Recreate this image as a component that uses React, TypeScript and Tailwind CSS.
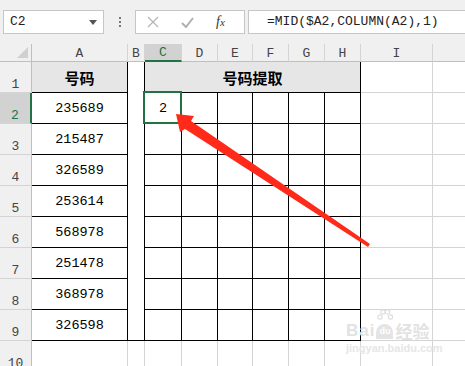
import React from "react";

const mono = "font-['Liberation_Mono','DejaVu_Sans_Mono',monospace]";
const cjk = "font-['Noto_Sans_CJK_SC',sans-serif]";

const numbers = ["235689", "215487", "326589", "253614", "568978", "251478", "368978", "326598"];

// column widths incl. right border
const inner = ["w-[37px]", "w-[36px]", "w-[35px]", "w-[36px]", "w-[36px]", "w-[36px]"];

function RowHead({ n, active }: { n: number; active?: boolean }) {
  return (
    <div
      className={`w-[32px] shrink-0 flex items-end justify-center pb-[1px] text-[13px] leading-none border-b border-[#d4d4d4] ${mono} ${
        active
          ? "bg-[#d2d2d2] text-[#217346] border-r-2 border-r-[#217346]"
          : "bg-[#f0f0f0] text-[#444] border-r border-r-[#bfbfbf]"
      }`}
    >
      {n}
    </div>
  );
}

function GrayTail() {
  return (
    <>
      <div className="w-[72px] shrink-0 border-r border-b border-[#d4d4d4]" />
      <div className="w-[40px] shrink-0 border-r border-b border-[#d4d4d4]" />
    </>
  );
}

export default function App() {
  return (
    <div className="relative w-[465px] h-[366px] overflow-hidden bg-white">
      {/* formula bar */}
      <div className="h-[44px] bg-[#f0f0f0] flex items-start pt-[10px] pl-[3px]">
        <div className="w-[101px] h-[24px] shrink-0 bg-white border border-[#c6c6c6] flex items-center justify-between pl-[6px] pr-[6px]">
          <span className={`${mono} text-[13px] text-[#222]`}>C2</span>
          <svg width="8" height="5" viewBox="0 0 8 5">
            <path d="M0 0h8L4 5z" fill="#555" />
          </svg>
        </div>
        <div className="w-[31px] h-[24px] shrink-0 flex flex-col items-center justify-center gap-[2px]">
          <span className="w-[2px] h-[2px] bg-[#777]" />
          <span className="w-[2px] h-[2px] bg-[#777]" />
          <span className="w-[2px] h-[2px] bg-[#777]" />
        </div>
        <div className="w-[110px] h-[24px] shrink-0 bg-white border border-[#c6c6c6] flex items-center pl-[11px]">
          <svg width="12" height="12" viewBox="0 0 12 12" className="mr-[22px]">
            <path d="M1 1l10 10M11 1L1 11" stroke="#b5b5b5" strokeWidth="1.3" />
          </svg>
          <svg width="13" height="11" viewBox="0 0 13 11" className="mr-[22px]">
            <path d="M1 6l4 4 7-9" stroke="#b0b0b0" strokeWidth="2" fill="none" />
          </svg>
          <span className="font-['Liberation_Serif',serif] italic text-[14px] text-[#333] leading-none">
            f<span className="text-[11px]">x</span>
          </span>
        </div>
        <div className="w-[230px] h-[24px] shrink-0 ml-[3px] bg-white border border-[#c6c6c6] flex items-center pl-[18px]">
          <span className={`${mono} text-[13px] text-[#222] whitespace-nowrap`}>=MID($A2,COLUMN(A2),1)</span>
        </div>
      </div>

      {/* column headers */}
      <div className={`flex h-[18px] bg-[#f0f0f0] text-[13px] text-[#444] ${mono}`}>
        <div className="w-[32px] shrink-0 border-r border-b border-[#bfbfbf] flex items-end justify-end pr-[3px] pb-[3px]">
          <svg width="11" height="11" viewBox="0 0 11 11">
            <path d="M11 0v11H0z" fill="#d0d0d0" />
          </svg>
        </div>
        <div className="w-[96px] shrink-0 border-r border-[#d4d4d4] border-b border-b-[#bfbfbf] flex items-center justify-center pt-[2px]">A</div>
        <div className="w-[17px] shrink-0 border-r border-[#d4d4d4] border-b border-b-[#bfbfbf] flex items-center justify-center pt-[2px]">B</div>
        <div className="w-[37px] shrink-0 bg-[#d2d2d2] text-[#217346] border-r border-[#d4d4d4] border-b-2 border-b-[#217346] flex items-center justify-center pt-[2px]">C</div>
        {["D", "E", "F", "G", "H"].map((c, i) => (
          <div
            key={c}
            className={`${inner[i + 1]} shrink-0 border-r border-[#d4d4d4] border-b border-b-[#bfbfbf] flex items-center justify-center pt-[2px]`}
          >
            {c}
          </div>
        ))}
        <div className="w-[72px] shrink-0 border-r border-[#d4d4d4] border-b border-b-[#bfbfbf] flex items-center justify-center pt-[2px]">I</div>
        <div className="w-[40px] shrink-0 border-r border-[#d4d4d4] border-b border-b-[#bfbfbf]" />
      </div>

      {/* row 1 */}
      <div className="flex h-[31px]">
        <RowHead n={1} />
        <div className={`w-[96px] shrink-0 bg-[#e7e6e6] border-r border-b border-black flex items-center justify-center pt-[3px] text-[15px] font-bold text-black ${cjk}`}>
          号码
        </div>
        <div className="w-[17px] shrink-0 border-r border-black" />
        <div className={`w-[216px] shrink-0 bg-[#e7e6e6] border-r border-b border-black flex items-center justify-center pt-[3px] text-[15px] font-bold text-black ${cjk}`}>
          号码提取
        </div>
        <GrayTail />
      </div>

      {/* rows 2-9 */}
      {numbers.map((num, r) => (
        <div key={num} className="flex h-[31px]">
          <RowHead n={r + 2} active={r === 0} />
          <div className={`w-[96px] shrink-0 border-r border-b border-black flex items-center justify-center pt-[3px] text-[13.5px] text-black ${mono}`}>
            {num}
          </div>
          <div className={`w-[17px] shrink-0 border-r border-black ${r === 7 ? "border-b" : ""}`} />
          {inner.map((w, c) => (
            <div key={c} className={`${w} shrink-0 border-r border-b border-black relative flex items-center justify-center pt-[3px] text-[13.5px] text-black ${mono}`}>
              {r === 0 && c === 0 && (
                <>
                  2
                  <div className="absolute -left-[2px] -top-[2px] w-[39px] h-[33px] border-2 border-[#217346]" />
                </>
              )}
            </div>
          ))}
          <GrayTail />
        </div>
      ))}

      {/* row 10 */}
      <div className="flex h-[31px]">
        <RowHead n={10} />
        <div className="w-[96px] shrink-0 border-r border-b border-[#d4d4d4]" />
        <div className="w-[17px] shrink-0 border-r border-b border-[#d4d4d4]" />
        {inner.map((w, c) => (
          <div key={c} className={`${w} shrink-0 border-r border-b border-[#d4d4d4]`} />
        ))}
        <GrayTail />
      </div>

      {/* red arrow */}
      <svg className="absolute left-0 top-0 pointer-events-none" width="465" height="366" viewBox="0 0 465 366">
        <polygon
          points="176,114 194,116 191,121 370,244 368,247 185,129 180,132"
          fill="#ff2a1a"
        />
      </svg>

      {/* watermark */}
      <div className="absolute left-[346px] top-[309px] pointer-events-none flex flex-col items-start">
        <div className="flex items-end h-[30px]">
          <span className="font-['Liberation_Sans',sans-serif] font-bold text-[17px] leading-none text-[#e2e2e2] tracking-[1px]">Bai</span>
          <div className="relative w-[19px] h-[30px] flex flex-col items-center justify-end">
            <svg width="16" height="14" viewBox="0 0 16 14" className="absolute top-0">
              <circle cx="3" cy="8" r="2.2" fill="none" stroke="#dedede" strokeWidth="1.2" />
              <circle cx="6" cy="3" r="2.2" fill="none" stroke="#dedede" strokeWidth="1.2" />
              <circle cx="10.5" cy="3" r="2.2" fill="none" stroke="#dedede" strokeWidth="1.2" />
              <circle cx="13.5" cy="8" r="2.2" fill="none" stroke="#dedede" strokeWidth="1.2" />
            </svg>
            <div className="w-[17px] h-[15px] rounded-t-full rounded-b-[6px] bg-[#e4e4e4] flex items-center justify-center">
              <span className="font-['Liberation_Sans',sans-serif] font-bold text-[9px] leading-none text-white">du</span>
            </div>
          </div>
          <span className={`${cjk} font-bold text-[17px] leading-none text-[#e2e2e2] ml-[1px]`}>经验</span>
        </div>
        <span className="font-['Liberation_Sans',sans-serif] font-bold text-[11px] leading-none mt-[4px] text-[#e6e6e6]">
          jingyan.baidu.com
        </span>
      </div>
    </div>
  );
}
